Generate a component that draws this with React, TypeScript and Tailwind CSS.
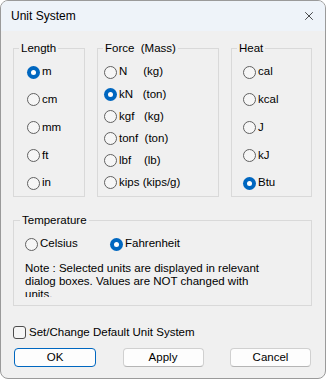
import { X } from "lucide-react";

function Radio({ checked }: { checked?: boolean }) {
  if (checked) {
    return (
      <span className="w-[13px] h-[13px] rounded-full bg-[#0067c0] flex items-center justify-center shrink-0">
        <span className="w-[5px] h-[5px] rounded-full bg-white" />
      </span>
    );
  }
  return <span className="w-[13px] h-[13px] rounded-full border border-[#616161] bg-[#f6f6f6] shrink-0" />;
}

function Option({ label, checked }: { label: string; checked?: boolean }) {
  return (
    <label className="flex items-center gap-[2px] h-4 whitespace-pre">
      <Radio checked={checked} />
      <span>{label}</span>
    </label>
  );
}

function Group({
  title,
  width,
  pad,
  children,
}: {
  title: string;
  width: string;
  pad: string;
  children: React.ReactNode;
}) {
  return (
    <fieldset className={`border border-[#d9d9d9] ${width}`}>
      <legend className="ml-[5px] px-[2px] leading-4 whitespace-pre">{title}</legend>
      <div className={`h-[140px] pt-[8px] pb-[5px] flex flex-col justify-between ${pad}`}>{children}</div>
    </fieldset>
  );
}

export default function App() {
  return (
    <div className="w-[326px] h-[379px] bg-white font-['Liberation_Sans',sans-serif] text-[11.5px] text-black">
      <div className="w-full h-full rounded-lg border border-[#9a9a9a] overflow-hidden flex flex-col bg-[#f0f0f0]">
        {/* title bar */}
        <div className="h-[30px] bg-[#eef3f9] flex items-center justify-between pl-[10px] pr-[9px] shrink-0">
          <span className="text-[12px]">Unit System</span>
          <X className="w-[14px] h-[14px]" strokeWidth={1.2} />
        </div>

        <div className="pt-[9px] flex gap-[12px] pl-[12px]">
          <Group title="Length" width="w-[72px]" pad="pl-[13px]">
            <Option label="m" checked />
            <Option label="cm" />
            <Option label="mm" />
            <Option label="ft" />
            <Option label="in" />
          </Group>
          <Group title="Force  (Mass)" width="w-[122px]" pad="pl-[6px]">
            <Option label="N     (kg)" />
            <Option label="kN   (ton)" checked />
            <Option label="kgf   (kg)" />
            <Option label="tonf  (ton)" />
            <Option label="lbf    (lb)" />
            <Option label="kips (kips/g)" />
          </Group>
          <Group title="Heat" width="w-[81px]" pad="pl-[11px]">
            <Option label="cal" />
            <Option label="kcal" />
            <Option label="J" />
            <Option label="kJ" />
            <Option label="Btu" checked />
          </Group>
        </div>

        <fieldset className="border border-[#d9d9d9] ml-[12px] w-[299px] mt-[15px]">
          <legend className="ml-[6px] px-[2px] leading-4">Temperature</legend>
          <div className="pt-[8px] pb-[8px] pl-[11px]">
            <div className="flex items-center">
              <div className="w-[85px]">
                <Option label="Celsius" />
              </div>
              <Option label="Fahrenheit" checked />
            </div>
            <p className="mt-[10px] w-[240px] h-[35px] overflow-hidden leading-[13px]">
              Note : Selected units are displayed in relevant dialog boxes. Values are NOT changed with units.
            </p>
          </div>
        </fieldset>

        <label className="mt-[20px] ml-[12px] flex items-center gap-[3px] h-[13px]">
          <span className="w-[13px] h-[13px] rounded-[3px] border border-[#4d4d4d] bg-[#f6f6f6]" />
          <span>Set/Change Default Unit System</span>
        </label>

        <div className="mt-[9px] ml-[13px] w-[297px] flex justify-between">
          <button className="w-[82px] h-[19px] rounded-[4px] border border-[#0067c0] bg-[#fdfdfd] leading-none">OK</button>
          <button className="w-[81px] h-[19px] rounded-[4px] border border-[#d0d0d0] border-b-[#b5b5b5] bg-[#fdfdfd] leading-none">Apply</button>
          <button className="w-[81px] h-[19px] rounded-[4px] border border-[#d0d0d0] border-b-[#b5b5b5] bg-[#fdfdfd] leading-none">Cancel</button>
        </div>
      </div>
    </div>
  );
}
